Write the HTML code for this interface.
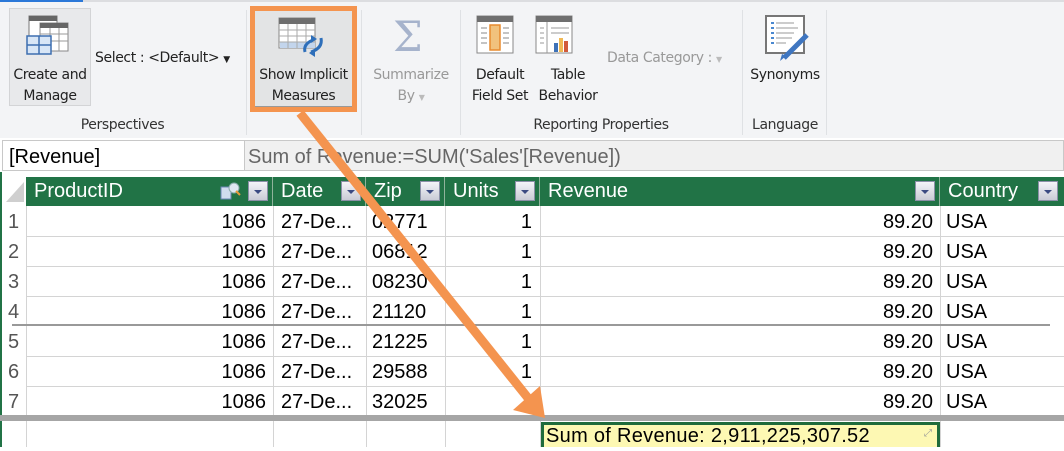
<!DOCTYPE html>
<html><head><meta charset="utf-8"><style>
*{margin:0;padding:0;box-sizing:border-box}
body{width:1064px;height:447px;overflow:hidden;background:#fff;position:relative;font-family:"Liberation Sans",sans-serif}
.a{position:absolute}
.rb{font-family:"DejaVu Sans","Liberation Sans",sans-serif;font-size:14px;color:#222;text-align:center;line-height:21px;letter-spacing:-0.4px}
.gray{color:#999}
.sep{position:absolute;top:10px;width:1px;height:125px;background:#dfe1e4}
.cell{position:absolute;font-size:20px;color:#000;line-height:30px;white-space:nowrap}
.hd{position:absolute;top:177px;height:29px;background:#217346;color:#fff;font-size:20px;line-height:29px;padding-left:8px;border-right:1px solid #8fb39c}
.dd{position:absolute;top:4px;width:20px;height:20px;background:linear-gradient(#f4f4f8,#c9cbd6);border:1px solid #8c90a8}
.dd:after{content:"";position:absolute;left:5px;top:8px;border-left:4px solid transparent;border-right:4px solid transparent;border-top:4px solid #3b4a82}
.vl{position:absolute;top:206px;width:1px;height:241px;background:#d4d4d4}
.hl{position:absolute;left:26px;width:1038px;height:1px;background:#d4d4d4}
</style></head><body>
<div class="a" style="left:0;top:0;width:1064px;height:138px;background:#f3f4f6"></div>
<div class="a" style="left:0;top:0;width:1064px;height:2px;background:#dcdde0"></div>
<div class="a" style="left:0;top:0;width:83px;height:2px;background:#2b78d8"></div>
<div class="sep" style="left:246px"></div>
<div class="sep" style="left:361px"></div>
<div class="sep" style="left:460px"></div>
<div class="sep" style="left:742px"></div>
<div class="sep" style="left:826px"></div>
<div class="a" style="left:9px;top:8px;width:82px;height:98px;background:#e8e9eb;border:1px solid #d3d4d6"></div>
<svg class="a" style="left:24px;top:14px" width="54" height="42">
<rect x="5" y="2" width="28" height="24" fill="#fff" stroke="#777"/><rect x="5" y="2" width="28" height="5" fill="#666"/>
<rect x="16" y="9" width="28" height="28" fill="#fff" stroke="#888"/><rect x="16" y="9" width="28" height="5" fill="#666"/>
<path d="M16 20H44M16 27H44M26 14V37M35 14V37" stroke="#999"/>
<rect x="3" y="22" width="24" height="18" fill="#d8e6f6" stroke="#3d6fb0" stroke-width="1.5"/><path d="M3 31H27M15 22V40" stroke="#3d6fb0" stroke-width="1.5"/>
</svg>
<div class="a rb" style="left:9px;top:65px;width:82px">Create and<br>Manage</div>
<div class="a rb" style="left:95px;top:48px;text-align:left">Select : &lt;Default&gt; <span style="font-size:9px">▼</span></div>
<div class="a rb" style="left:60px;top:115px;width:125px;color:#333">Perspectives</div>
<div class="a" style="left:255px;top:11px;width:97px;height:96px;background:#e3e4e5;border-bottom:1px solid #999"></div>
<svg class="a" style="left:277px;top:16px" width="50" height="42">
<rect x="2" y="2" width="36" height="30" fill="#fff" stroke="#888"/><rect x="2" y="2" width="36" height="6" fill="#6f6f6f"/>
<rect x="3" y="26" width="35" height="6" fill="#c3d5ec"/>
<path d="M2 14H38M2 20H38M2 26H38M11 8V32M20 8V32M29 8V32" stroke="#aaa"/>
<path d="M28 36 Q26 28 36 24 M44 22 Q46 32 34 36" stroke="#2e6fba" stroke-width="3" fill="none"/>
<path d="M34 19 L40 23 L34 27Z M38 33 L32 37 L38 41Z" fill="#2e6fba"/>
</svg>
<div class="a rb" style="left:250px;top:65px;width:107px">Show Implicit<br>Measures</div>
<div class="a" style="left:250px;top:6px;width:107px;height:106px;border:5px solid #f4944f"></div>
<div class="a" style="left:393px;top:12px;font-size:42px;color:#a6b3cc;font-family:'DejaVu Serif',serif">Σ</div>
<div class="a rb gray" style="left:365px;top:65px;width:92px">Summarize<br>By <span style="font-size:8px;color:#bbb">▼</span></div>
<svg class="a" style="left:476px;top:15px" width="40" height="42">
<rect x="1" y="1" width="36" height="37" fill="#fff" stroke="#888"/><rect x="1" y="1" width="36" height="6" fill="#6f6f6f"/>
<rect x="14" y="10" width="10" height="25" fill="#f1c27d" stroke="#e88b2f" stroke-width="1.5"/>
<path d="M5 13H11M5 18H11M5 23H11M5 28H11M27 13H33M27 18H33M27 23H33M27 28H33" stroke="#888"/>
</svg>
<div class="a rb" style="left:466px;top:65px;width:68px">Default<br>Field Set</div>
<svg class="a" style="left:535px;top:15px" width="40" height="42">
<rect x="1" y="1" width="36" height="37" fill="#fff" stroke="#888"/><rect x="1" y="1" width="36" height="6" fill="#6f6f6f"/>
<path d="M12 7V38M5 13H9M5 18H9M5 23H9M5 28H9M16 13H34M16 18H34" stroke="#999"/>
<rect x="19" y="28" width="4" height="9" fill="#3e72b8"/><rect x="24" y="23" width="4" height="14" fill="#f1b954"/><rect x="29" y="26" width="4" height="11" fill="#d25a3a"/>
</svg>
<div class="a rb" style="left:532px;top:65px;width:72px">Table<br>Behavior</div>
<div class="a rb gray" style="left:607px;top:48px">Data Category : <span style="font-size:8px;color:#bbb">▼</span></div>
<div class="a rb" style="left:462px;top:115px;width:278px;color:#333">Reporting Properties</div>
<svg class="a" style="left:764px;top:15px" width="48" height="46">
<rect x="2" y="1" width="38" height="37" fill="#fff" stroke="#777" stroke-width="2"/>
<path d="M7 8H10M7 13H10M7 18H10M7 23H10M7 28H10" stroke="#4a88d0" stroke-width="2"/>
<path d="M12 8H30M12 13H34M12 18H30M12 23H28M12 28H22" stroke="#999"/>
<path d="M43 20 L20 43" stroke="#3f76c0" stroke-width="5"/><path d="M22 41 L16 46 L18 39Z" fill="#3f76c0"/>
</svg>
<div class="a rb" style="left:744px;top:65px;width:82px">Synonyms</div>
<div class="a rb" style="left:744px;top:115px;width:82px;color:#333">Language</div>
<div class="a" style="left:0;top:138px;width:1064px;height:39px;background:#fff"></div>
<div class="a" style="left:2px;top:140px;width:1062px;height:31px;background:#f0f0f0;border:1px solid #c8c8c8"></div>
<div class="a" style="left:3px;top:141px;width:242px;height:29px;background:#fff;border-right:1px solid #c8c8c8"></div>
<div class="cell" style="left:9px;top:142px;line-height:30px">[Revenue]</div>
<div class="cell" style="left:248px;top:142px;color:#666;line-height:30px">Sum of Revenue:=SUM('Sales'[Revenue])</div>
<div class="a" style="left:0;top:177px;width:26px;height:29px;background:#fff"></div>
<svg class="a" style="left:4px;top:180px" width="22" height="24"><path d="M20 2 V22 H2Z" fill="#cfcfcf"/></svg>
<div class="a" style="left:0;top:172px;width:2px;height:275px;background:#217346"></div>
<div class="hd" style="left:26px;width:247px">ProductID<svg style="position:absolute;left:194px;top:4px" width="22" height="20"><rect x="1" y="6" width="10" height="12" fill="#d0dcee" stroke="#6b86b6"/><circle cx="14" cy="7" r="5" fill="#dfe7f3" stroke="#8aa"/><path d="M16 10 L20 14" stroke="#e79a3c" stroke-width="2"/></svg><span class="dd" style="left:222px"></span></div>
<div class="hd" style="left:273px;width:93px">Date<span class="dd" style="left:68px"></span></div>
<div class="hd" style="left:366px;width:79px">Zip<span class="dd" style="left:54px"></span></div>
<div class="hd" style="left:445px;width:95px">Units<span class="dd" style="left:70px"></span></div>
<div class="hd" style="left:540px;width:400px">Revenue<span class="dd" style="left:375px"></span></div>
<div class="hd" style="left:940px;width:124px;border-right:none">Country<span class="dd" style="left:98px"></span></div>
<div class="vl" style="left:26px"></div><div class="vl" style="left:273px"></div><div class="vl" style="left:366px"></div>
<div class="vl" style="left:445px"></div><div class="vl" style="left:540px"></div><div class="vl" style="left:940px"></div>
<div class="hl" style="top:236px"></div><div class="hl" style="top:266px"></div><div class="hl" style="top:296px"></div>
<div class="hl" style="top:324px;background:#999;height:2px;left:12px"></div><div class="hl" style="top:356px"></div><div class="hl" style="top:386px"></div>
<div class="a" style="left:0;top:415px;width:1064px;height:6px;background:#a6a6a6"></div>
<div id="rows"></div>
<script>
var z=["02771","06812","08230","21120","21225","29588","32025"],h="";
for(var i=0;i<7;i++){var t=207+i*30;
h+='<div class="cell" style="left:8px;top:'+t+'px;color:#555">'+(i+1)+'</div>'+
'<div class="cell" style="left:26px;width:240px;text-align:right;top:'+t+'px">1086</div>'+
'<div class="cell" style="left:281px;top:'+t+'px">27-De...</div>'+
'<div class="cell" style="left:372px;top:'+t+'px">'+z[i]+'</div>'+
'<div class="cell" style="left:445px;width:87px;text-align:right;top:'+t+'px">1</div>'+
'<div class="cell" style="left:540px;width:393px;text-align:right;top:'+t+'px">89.20</div>'+
'<div class="cell" style="left:946px;top:'+t+'px">USA</div>';}
document.getElementById("rows").innerHTML=h;
</script>
<div class="a" style="left:541px;top:422px;width:399px;height:25px;background:#fdf8b3;border:3px solid #1f6b3b;border-bottom:none"></div>
<div class="cell" style="left:546px;top:421px;line-height:30px;font-size:20px;letter-spacing:0.3px">Sum of Revenue: 2,911,225,307.52</div>
<div class="a" style="left:924px;top:428px;font-size:10px;color:#999">⤢</div>
<svg class="a" style="left:0;top:0" width="1064" height="447">
<path d="M300 113 L528 398" stroke="#f4944f" stroke-width="9"/>
<path d="M513 410 L545 418 L540 386Z" fill="#f4944f"/>
</svg>
</body></html>
